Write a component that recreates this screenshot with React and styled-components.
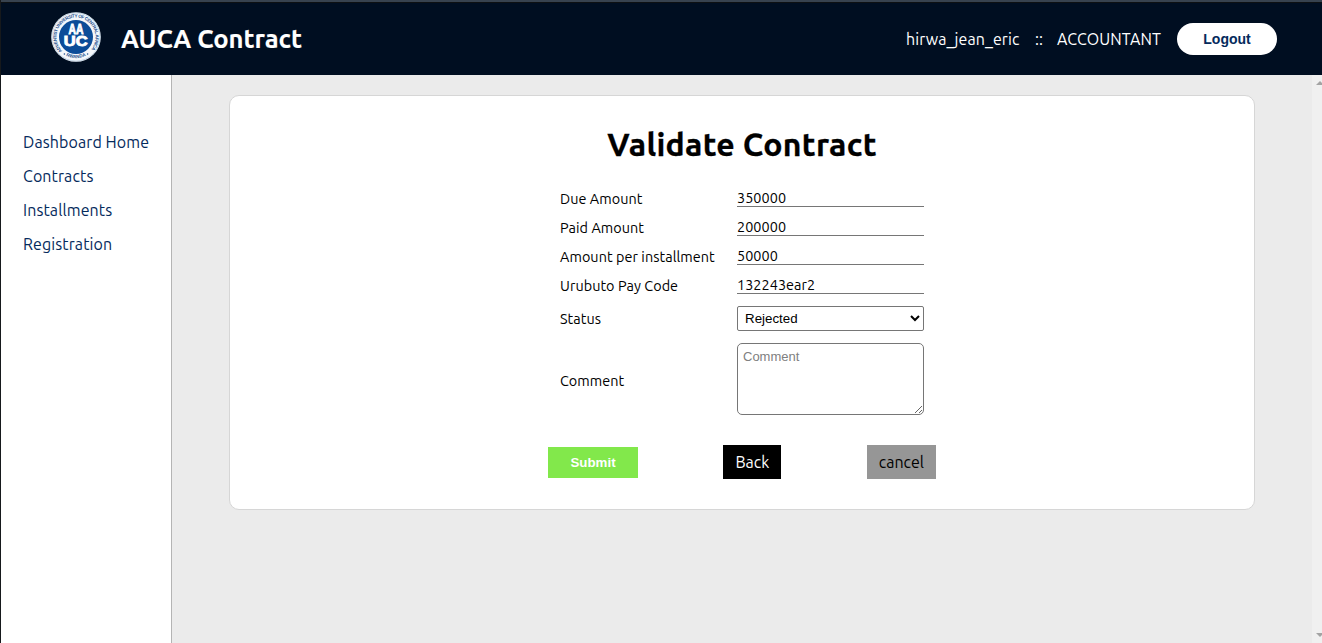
import React from "react";
import styled, { createGlobalStyle } from "styled-components";

const GlobalStyle = createGlobalStyle`
  *, *::before, *::after { box-sizing: border-box; }
  body {
    margin: 0;
    font-family: Ubuntu, "Noto Sans", sans-serif;
    color: #000;
    background: #fff;
  }
`;

const Page = styled.div`
  display: flex;
  flex-direction: column;
  height: 643px;
  border-left: 1px solid #16191c;
  overflow: hidden;
`;

const Header = styled.header`
  display: flex;
  align-items: center;
  height: 75px;
  flex: none;
  padding: 0 45px 0 50px;
  border-top: 2px solid #37424f;
  box-shadow: inset 0 1px 0 #0d1013;
  background: #000e21;
  color: #fff;
`;

const Brand = styled.div`
  display: flex;
  align-items: center;
  gap: 20px;
  flex: 1;
`;

const LogoSvg = styled.svg`
  display: block;
  width: 50px;
  height: 50px;
  margin-top: -3px;
`;

const BrandName = styled.span`
  font-size: 25.6px;
  font-weight: 700;
  letter-spacing: -0.08px;
  -webkit-text-stroke: 0.12px currentColor;
  line-height: 30px;
  white-space: nowrap;
`;

const Account = styled.div`
  display: flex;
  align-items: center;
  gap: 16px;
`;

const AccountText = styled.span`
  width: ${(p) => p.$width}px;
  font-size: 16px;
  letter-spacing: 0.1px;
  line-height: 20px;
  white-space: nowrap;
`;

const LogoutButton = styled.button`
  width: 100px;
  height: 32px;
  padding: 0;
  border: 0;
  border-radius: 16px;
  background: #fff;
  color: #042a5c;
  font: 700 14px "Liberation Sans", Arial, sans-serif;
`;

const Body = styled.div`
  display: flex;
  flex: 1;
  min-height: 0;
`;

const Sidebar = styled.nav`
  display: flex;
  flex-direction: column;
  width: 171px;
  flex: none;
  padding: 50px 0 0 22px;
  border-right: 1px solid #b4b4b4;
  background: #fff;
`;

const NavLink = styled.a`
  height: 34px;
  font-size: 16px;
  letter-spacing: 0.1px;
  line-height: 34px;
  color: #042a5c;
  text-decoration: none;
  white-space: nowrap;
`;

const Main = styled.main`
  flex: 1;
  padding: 20px 57px 0;
  background: #ebebeb;
`;

const Card = styled.section`
  display: flex;
  flex-direction: column;
  align-items: center;
  height: 415px;
  border: 1px solid #d6d6d6;
  border-radius: 10px;
  background: #fff;
`;

const Title = styled.h1`
  margin: 28px 0 22px;
  font-size: 32px;
  line-height: 40px;
  font-weight: 700;
  letter-spacing: 0.28px;
  -webkit-text-stroke: 0.3px currentColor;
  white-space: nowrap;
`;

const Form = styled.form`
  display: flex;
  flex-direction: column;
  width: 364px;
`;

const Row = styled.div`
  display: grid;
  grid-template-columns: 177px 187px;
  align-items: ${(p) => (p.$center ? "center" : "start")};
  height: ${(p) => p.$height}px;
`;

const Label = styled.label`
  padding-top: ${(p) => p.$drop || 0}px;
  font-size: 14.4px;
  letter-spacing: 0.06px;
  line-height: 20px;
  white-space: nowrap;
`;

const TextInput = styled.input`
  width: 187px;
  height: 21px;
  padding: 4px 0 0;
  border: 0;
  border-bottom: 1px solid #767676;
  background: transparent;
  color: #000;
  font-family: inherit;
  font-size: 14.4px;
  letter-spacing: 0.06px;
  outline: none;
`;

const Select = styled.select`
  width: 187px;
  height: 25px;
  padding: 0 0 0 3px;
  border: 1px solid #767676;
  border-radius: 2px;
  background: #fff;
  color: #000;
  font: 13.333px "Liberation Sans", Arial, sans-serif;
`;

const CommentBox = styled.textarea`
  display: block;
  width: 187px;
  height: 72px;
  padding: 5px;
  border: 1px solid #767676;
  border-radius: 5px;
  font: 13px "Liberation Sans", Arial, sans-serif;
  &::placeholder { color: #808080; }
`;

const Actions = styled.div`
  display: flex;
  justify-content: space-between;
  align-items: center;
  width: 388px;
  height: 34px;
  margin-top: 22px;
`;

const SubmitButton = styled.button`
  width: 90px;
  height: 31px;
  padding: 0;
  border: 0;
  background: #82e84b;
  color: #fff;
  font: 700 13.333px "Liberation Sans", Arial, sans-serif;
`;

const ActionLink = styled.a`
  padding: 0 12px;
  height: 34px;
  background: ${(p) => p.$bg};
  color: ${(p) => p.$color};
  font-size: 16px;
  line-height: 34px;
`;

const Scrollbar = styled.div`
  display: flex;
  flex-direction: column;
  justify-content: space-between;
  align-items: flex-end;
  width: 10px;
  flex: none;
  padding: 6px 0;
  background: #f0f0f0;
  overflow: hidden;
`;

const ArrowSvg = styled.svg`
  display: block;
  width: 6px;
  height: 4px;
  flex: none;
`;

const Logo = () => (
  <LogoSvg viewBox="0 0 50 50" aria-label="AUCA">
    <defs>
      <path id="ring" d="M11.2 38.8 A19.5 19.5 0 1 1 38.8 38.8" />
      <path id="ringBottom" d="M13 42.4 A21.1 21.1 0 0 0 37 42.4" />
    </defs>
    <circle cx="25" cy="25" r="24.8" fill="#f4f7fa" />
    <circle cx="25" cy="25" r="24.1" fill="none" stroke="#8fb0ce" strokeWidth=".5" />
    <circle cx="25" cy="25" r="17" fill="#0b4c98" />
    <g fill="#1d4f8e" fontFamily="Liberation Sans, sans-serif" fontWeight="700" fontSize="4.6">
      <text textLength="89"><textPath href="#ring">ADVENTIST UNIVERSITY OF CENTRAL AFRICA</textPath></text>
      <text textAnchor="middle"><textPath href="#ringBottom" startOffset="50%">RWANDA</textPath></text>
    </g>
    <circle cx="13.4" cy="42" r=".8" fill="#1d4f8e" />
    <circle cx="36.6" cy="42" r=".8" fill="#1d4f8e" />
    <g fill="#fff" stroke="#fff" strokeWidth=".9" fontFamily="Liberation Sans, sans-serif" fontWeight="700">
      <text transform="translate(17.6 21.6) scale(.74 1)" fontSize="14">AA</text>
      <text transform="translate(12.8 34.2) scale(1.14 1)" fontSize="14.5">UC</text>
    </g>
  </LogoSvg>
);

const navItems = ["Dashboard Home", "Contracts", "Installments", "Registration"];

const fields = [
  { name: "Due Amount", value: "350000" },
  { name: "Paid Amount", value: "200000" },
  { name: "Amount per installment", value: "50000" },
  { name: "Urubuto Pay Code", value: "132243ear2" },
];

export default function App() {
  return (
    <>
      <GlobalStyle />
      <Page>
        <Header>
          <Brand>
            <Logo />
            <BrandName>AUCA Contract</BrandName>
          </Brand>
          <Account>
            <AccountText $width={113}>hirwa_jean_eric</AccountText>
            <AccountText $width={6}>::</AccountText>
            <AccountText $width={104}>ACCOUNTANT</AccountText>
            <LogoutButton>Logout</LogoutButton>
          </Account>
        </Header>
        <Body>
          <Sidebar>
            {navItems.map((item) => (
              <NavLink key={item}>{item}</NavLink>
            ))}
          </Sidebar>
          <Main>
            <Card>
              <Title>Validate Contract</Title>
              <Form>
                {fields.map((field) => (
                  <Row key={field.name} $height={29}>
                    <Label $drop={3}>{field.name}</Label>
                    <TextInput defaultValue={field.value} />
                  </Row>
                ))}
                <Row $height={33} $center>
                  <Label>Status</Label>
                  <Select defaultValue="Rejected">
                    <option>Rejected</option>
                    <option>Approved</option>
                  </Select>
                </Row>
                <Row $height={88} $center>
                  <Label $drop={3}>Comment</Label>
                  <CommentBox placeholder="Comment" />
                </Row>
              </Form>
              <Actions>
                <SubmitButton type="button">Submit</SubmitButton>
                <ActionLink $bg="#000" $color="#fff">Back</ActionLink>
                <ActionLink $bg="#969696" $color="#000">cancel</ActionLink>
              </Actions>
            </Card>
          </Main>
          <Scrollbar>
            <ArrowSvg viewBox="0 0 6 4"><path d="M0 4 4 0 8 4Z" fill="#a3a3a3" /></ArrowSvg>
            <ArrowSvg viewBox="0 0 6 4"><path d="M0 0 4 4 8 0Z" fill="#a3a3a3" /></ArrowSvg>
          </Scrollbar>
        </Body>
      </Page>
    </>
  );
}
